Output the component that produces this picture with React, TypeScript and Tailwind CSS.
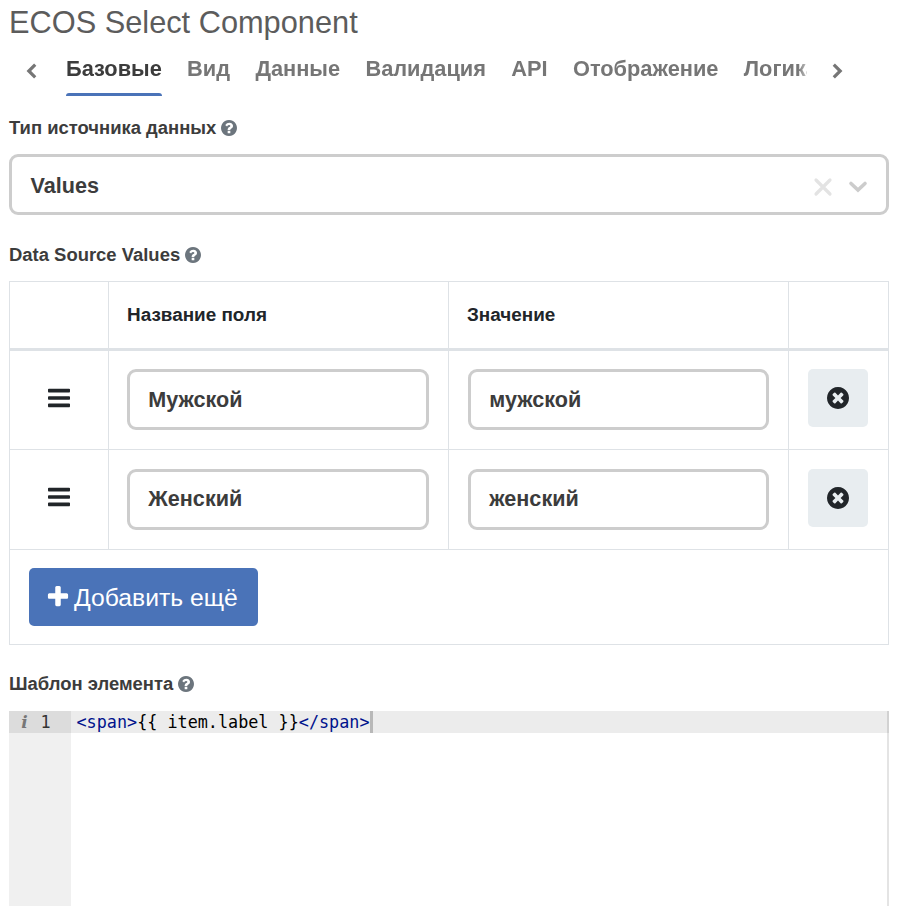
import React from 'react';

const CIRCLE =
  'q0 209-103 385.5t-279.5 279.5-385.5 103-385.5-103-279.5-279.5-103-385.5 103-385.5 279.5-279.5 385.5-103 385.5 103 279.5 279.5 103 385.5z';

const PATHS = {
  help:
    'M1024 1376v-192q0-14-9-23t-23-9h-192q-14 0-23 9t-9 23v192q0 14 9 23t23 9h192q14 0 23-9t9-23zm256-672q0-88-55.5-163t-138.5-116-170-41q-243 0-371 213-15 24 8 42l132 100q7 6 19 6 16 0 25-12 53-68 86-92 34-24 86-24 48 0 85.5 26t37.5 59q0 38-20 61t-68 45q-63 28-115.5 86.5t-52.5 125.5v36q0 14 9 23t23 9h192q14 0 23-9t9-23q0-19 21.5-49.5t54.5-49.5q32-18 49-28.5t46-35 44.5-48 28-60.5 12.5-81zm384 192' +
    CIRCLE,
  remove:
    'M1277 1122q0-26-19-45l-181-181 181-181q19-19 19-45 0-27-19-46l-90-90q-19-19-46-19-26 0-45 19l-181 181-181-181q-19-19-45-19-27 0-46 19l-90 90q-19 19-19 46 0 26 19 45l181 181-181 181q-19 19-19 45 0 27 19 46l90 90q19 19 46 19 26 0 45-19l181-181 181 181q19 19 45 19 27 0 46-19l90-90q19-19 19-46zm387-226' +
    CIRCLE,
  bars:
    'M1664 1344v128q0 26-19 45t-45 19h-1408q-26 0-45-19t-19-45v-128q0-26 19-45t45-19h1408q26 0 45 19t19 45zm0-512v128q0 26-19 45t-45 19h-1408q-26 0-45-19t-19-45v-128q0-26 19-45t45-19h1408q26 0 45 19t19 45zm0-512v128q0 26-19 45t-45 19h-1408q-26 0-45-19t-19-45v-128q0-26 19-45t45-19h1408q26 0 45 19t19 45z',
  plus:
    'M1600 736v192q0 40-28 68t-68 28h-416v416q0 40-28 68t-68 28h-192q-40 0-68-28t-28-68v-416h-416q-40 0-68-28t-28-68v-192q0-40 28-68t68-28h416v-416q0-40 28-68t68-28h192q40 0 68 28t28 68v416h416q40 0 68 28t28 68z',
};

function Icon({ name, className }: { name: keyof typeof PATHS; className: string }) {
  return (
    <svg viewBox="128 128 1536 1536" fill="currentColor" className={className}>
      <path d={PATHS[name]} />
    </svg>
  );
}

function Chevron({ d, className }: { d: string; className: string }) {
  return (
    <svg viewBox="0 0 20 20" fill="none" stroke="currentColor" strokeWidth="3.2" className={className}>
      <path d={d} />
    </svg>
  );
}

function Label({ children }: { children: React.ReactNode }) {
  return (
    <div className="flex h-6 items-center gap-[5px] text-[18.45px] font-bold text-[#3c3c3c]">
      <span className="leading-6">{children}</span>
      <Icon name="help" className="size-4 text-[#6c757d]" />
    </div>
  );
}

const TABS = ['Базовые', 'Вид', 'Данные', 'Валидация', 'API', 'Отображение', 'Логика'];

function Tabs() {
  return (
    <nav className="mt-[3px] flex h-[54px] text-[#767676]">
      <Chevron d="M13.2 3.6 6.8 10l6.4 6.4" className="ml-[13px] mt-[19px] size-5 shrink-0" />
      <div className="ml-[24px] flex w-[741px] gap-[25.3px] overflow-hidden text-[21.8px] font-bold whitespace-nowrap [mask-image:linear-gradient(to_right,black_732px,transparent_748px)]">
        {TABS.map((t, i) => (
          <div
            key={t}
            className={
              i === 0
                ? 'flex h-[54px] flex-col justify-between text-[#3c3c3c]'
                : 'flex h-[54px] flex-col'
            }
          >
            <span className="mt-[11px] leading-[32px]">{t}</span>
            {i === 0 && <span className="h-[3px] rounded-t-[3px] bg-[#4a73b8]" />}
          </div>
        ))}
      </div>
      <Chevron d="m6.8 3.6 6.4 6.4-6.4 6.4" className="ml-[20px] mt-[19px] size-5 shrink-0" />
    </nav>
  );
}

function Field({ value }: { value: string }) {
  return (
    <div className="flex h-[61px] items-center rounded-[9px] border-[3px] border-[#cdcdcd] pl-[18.3px] pt-px text-[21.6px] font-bold text-[#3c3c3c]">
      {value}
    </div>
  );
}

const ROWS = [
  ['Мужской', 'мужской'],
  ['Женский', 'женский'],
];

const COLS = 'grid grid-cols-[98px_340px_340px_1fr]';

function ValuesTable() {
  return (
    <div className="mt-[14px] h-[364px] border border-[#dee2e6]">
      <div className={`${COLS} h-[69px] border-b-[3px] border-[#dee2e6] text-[18.9px] font-bold text-[#212529]`}>
        <div />
        <div className="flex items-center border-l border-[#dee2e6] pl-[18px]">Название поля</div>
        <div className="flex items-center border-l border-[#dee2e6] pl-[18px]">Значение</div>
        <div className="border-l border-[#dee2e6]" />
      </div>
      {ROWS.map(([name, value]) => (
        <div key={name} className={`${COLS} h-[99.3px] border-b border-[#dee2e6]`}>
          <div className="flex justify-center pt-[36px]">
            <Icon name="bars" className="size-[22px] text-[#212529]" />
          </div>
          <div className="border-l border-[#dee2e6] pl-[18px] pr-[19px] pt-[18.3px]">
            <Field value={name} />
          </div>
          <div className="border-l border-[#dee2e6] pl-[19px] pr-[19px] pt-[18.3px]">
            <Field value={value} />
          </div>
          <div className="border-l border-[#dee2e6] pl-[19px] pt-[18.3px]">
            <button className="flex h-[58px] w-[60px] items-center justify-center rounded-[5px] bg-[#e8edf0]">
              <Icon name="remove" className="size-[22px] text-[#212529]" />
            </button>
          </div>
        </div>
      ))}
      <button className="ml-[19px] mt-[18.7px] flex h-[58px] w-[229px] items-center rounded-[5px] bg-[#4a73b8] pl-[18px] text-[24.7px] text-white">
        <Icon name="plus" className="size-[22px]" />
        <span className="ml-[5px] whitespace-nowrap">Добавить ещё</span>
      </button>
    </div>
  );
}

function Editor() {
  return (
    <div className="mt-[15px] flex h-[195px] font-['DejaVu_Sans_Mono',monospace] text-[16.8px] leading-[22px]">
      <div className="w-[61.5px] bg-[#f0f0f0]">
        <div className="flex h-[22px] items-center bg-[#dcdcdc] text-[#333]">
          <span className="ml-[11px] w-[9px] text-center font-['DejaVu_Serif',serif] text-[17px] font-bold italic text-[#777]">i</span>
          <span className="ml-[11.5px]">1</span>
        </div>
      </div>
      <div className="flex-1 border-r-2 border-[#e4e4e4]">
        <div className="-mr-[2px] flex h-[22px] items-center border-r-2 border-[#d2d2d2] bg-[#ececec] pl-[6px] whitespace-pre text-black">
          <span className="text-[#00128c]">&lt;span&gt;</span>
          <span>{'{{ item.label }}'}</span>
          <span className="text-[#00128c]">&lt;/span&gt;</span>
          <span className="h-[22px] w-[3px] bg-[#b8b8b8]" />
        </div>
      </div>
    </div>
  );
}

export default function App() {
  return (
    <main className="h-[906px] w-[899px] overflow-hidden bg-white pl-[9px] pr-[10px] font-['Liberation_Sans',Arial,sans-serif]">
      <h1 className="flex h-[39px] items-center pt-[7px] text-[30.75px] leading-[36px] text-[#5c5c5c]">
        ECOS Select Component
      </h1>
      <Tabs />
      <div className="mt-5">
        <Label>Тип источника данных</Label>
      </div>
      <div className="mt-[14px] flex h-[61px] items-center rounded-[9px] border-[3px] border-[#cdcdcd] pl-[18.5px] text-[21.6px] font-bold text-[#3c3c3c]">
        <span className="flex-1 pt-[3px]">Values</span>
        <svg viewBox="0 0 20 20" fill="none" stroke="#e3e3e3" strokeWidth="3.2" strokeLinecap="round" className="mt-[4px] size-5">
          <path d="m3 3 14 14M17 3 3 17" />
        </svg>
        <svg viewBox="0 0 20 20" fill="none" stroke="#cccccc" strokeWidth="3.6" strokeLinecap="round" className="ml-[15px] mr-[18px] mt-[4px] size-5">
          <path d="m3 6.5 7 6.5 7-6.5" />
        </svg>
      </div>
      <div className="mt-[28px]">
        <Label>Data Source Values</Label>
      </div>
      <ValuesTable />
      <div className="mt-[27px]">
        <Label>Шаблон элемента</Label>
      </div>
      <Editor />
    </main>
  );
}
